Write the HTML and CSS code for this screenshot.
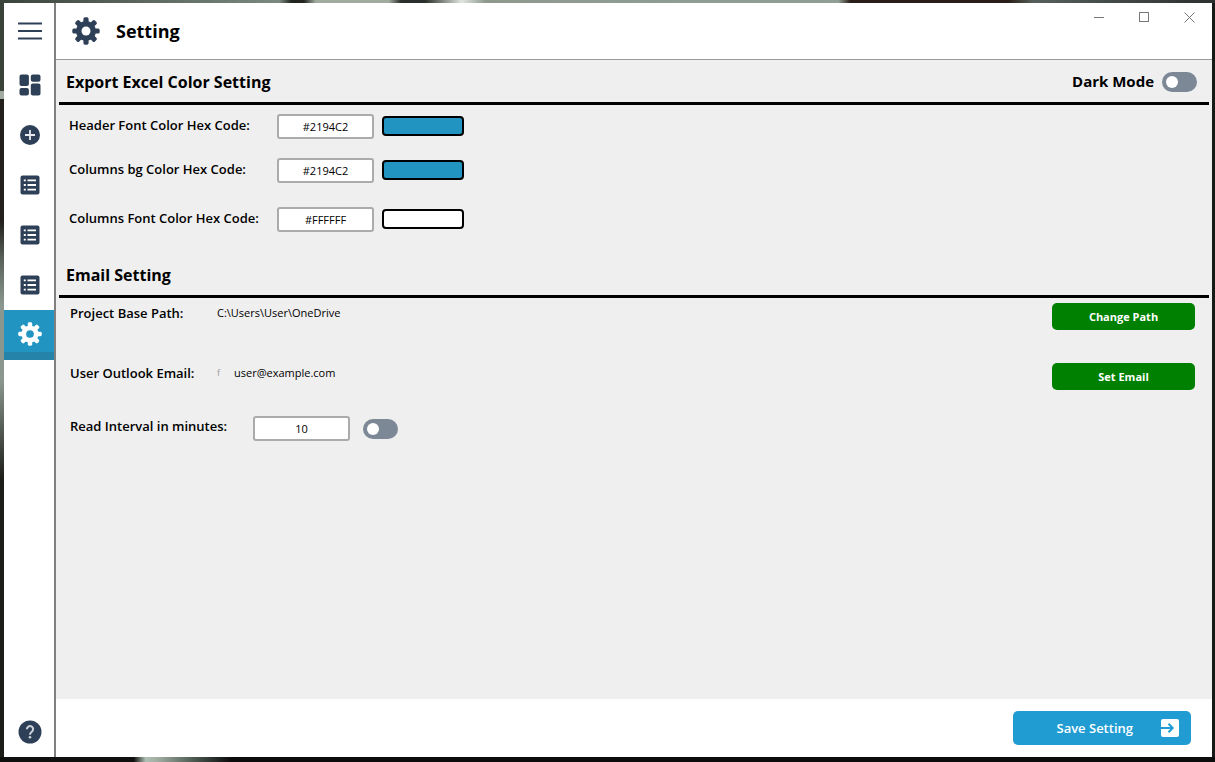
FILE: index.html
```html
<!DOCTYPE html>
<html lang="en">

<head>
    <meta charset="UTF-8">
    <meta name="viewport" content="width=device-width, initial-scale=1.0">
    <title>Setting</title>
    <link rel="stylesheet" href="styles.css">
</head>

<body>
    <!-- shapes used more than once -->
    <svg class="defs" aria-hidden="true">
        <symbol id="gear" viewBox="0 0 28 28">
            <g fill="currentColor">
                <rect x="11.4" y="0.3" width="5.2" height="27.4" rx="1.6" />
                <rect x="11.4" y="0.3" width="5.2" height="27.4" rx="1.6" transform="rotate(45 14 14)" />
                <rect x="11.4" y="0.3" width="5.2" height="27.4" rx="1.6" transform="rotate(90 14 14)" />
                <rect x="11.4" y="0.3" width="5.2" height="27.4" rx="1.6" transform="rotate(135 14 14)" />
                <circle cx="14" cy="14" r="10" />
            </g>
            <circle class="gear-hole" cx="14" cy="14" r="4.5" />
        </symbol>
        <symbol id="list" viewBox="0 0 20 20">
            <rect x="0.5" y="0.5" width="19" height="19" rx="2" fill="currentColor" />
            <path d="M7.5 5.3h8.5M7.5 10h8.5M7.5 14.7h8.5M3.8 5.3h2M3.8 10h2M3.8 14.7h2" stroke="#fff" stroke-width="1.8" />
        </symbol>
    </svg>

    <div class="window">
        <nav class="sidebar">
            <button class="menu" aria-label="Menu">
                <svg width="24" height="18" viewBox="0 0 24 18"><path d="M0 1.5h24M0 9h24M0 16.5h24" stroke="currentColor" stroke-width="2" /></svg>
            </button>
            <a class="item" href="#dashboard" aria-label="Dashboard">
                <svg width="22" height="22" viewBox="0 0 22 22" fill="currentColor">
                    <rect x="0.5" y="0.5" width="9.4" height="11.6" rx="2" />
                    <rect x="11.8" y="0.5" width="9.7" height="7.2" rx="2" />
                    <rect x="0.5" y="14" width="9.4" height="7.5" rx="2" />
                    <rect x="11.8" y="9.6" width="9.7" height="11.9" rx="2" />
                </svg>
            </a>
            <a class="item" href="#add" aria-label="Add">
                <svg width="22" height="22" viewBox="0 0 22 22">
                    <circle cx="11" cy="11" r="10" fill="currentColor" />
                    <path d="M11 6v10M6 11h10" stroke="#e8ecf0" stroke-width="1.8" />
                </svg>
            </a>
            <a class="item" href="#list1" aria-label="List 1"><svg width="20" height="20"><use href="#list" /></svg></a>
            <a class="item" href="#list2" aria-label="List 2"><svg width="20" height="20"><use href="#list" /></svg></a>
            <a class="item" href="#list3" aria-label="List 3"><svg width="20" height="20"><use href="#list" /></svg></a>
            <a class="item active" href="#setting" aria-label="Setting"><svg width="24" height="24"><use href="#gear" /></svg></a>
            <a class="item help" href="#help" aria-label="Help">
                <svg width="24" height="24" viewBox="0 0 24 24">
                    <circle cx="12" cy="12" r="11.5" fill="currentColor" />
                    <path d="M8.9 9.2a3.1 3.1 0 1 1 4.9 2.5c-1.2.9-1.8 1.4-1.8 3" fill="none" stroke="#ccd3da" stroke-width="2" />
                    <circle cx="12" cy="17.3" r="1.3" fill="#ccd3da" />
                </svg>
            </a>
        </nav>

        <div class="main">
            <header class="header">
                <svg width="28" height="28"><use href="#gear" /></svg>
                <h1>Setting</h1>
                <div class="controls">
                    <button aria-label="Minimize"><svg width="11" height="11"><path d="M0 5.5h10" stroke="#777" /></svg></button>
                    <button aria-label="Maximize"><svg width="11" height="11"><rect x="0.5" y="0.5" width="9" height="9" fill="none" stroke="#777" /></svg></button>
                    <button aria-label="Close"><svg width="11" height="11"><path d="M0.5 0.5l10 10M10.5 0.5l-10 10" stroke="#777" /></svg></button>
                </div>
            </header>

            <main class="content">
                <div class="title">
                    <h2>Export Excel Color Setting</h2>
                    <label class="dark" for="dark">Dark Mode</label>
                    <input class="switch" type="checkbox" id="dark">
                </div>
                <div class="colors">
                    <label for="headerFont">Header Font Color Hex Code:</label>
                    <input class="field" type="text" id="headerFont" value="#2194C2">
                    <button class="swatch blue" aria-label="Pick header font color"></button>
                    <label for="columnsBg">Columns bg Color Hex Code:</label>
                    <input class="field" type="text" id="columnsBg" value="#2194C2">
                    <button class="swatch blue" aria-label="Pick columns bg color"></button>
                    <label for="columnsFont">Columns Font Color Hex Code:</label>
                    <input class="field" type="text" id="columnsFont" value="#FFFFFF">
                    <button class="swatch" aria-label="Pick columns font color"></button>
                </div>

                <div class="title">
                    <h2>Email Setting</h2>
                </div>
                <div class="email">
                    <div class="row">
                        <span class="name">Project Base Path:</span>
                        <span class="path">C:\Users\User\OneDrive</span>
                        <button class="green">Change Path</button>
                    </div>
                    <div class="row">
                        <span class="name">User Outlook Email:</span>
                        <span class="mark">f</span>
                        <span class="address">user@example.com</span>
                        <button class="green">Set Email</button>
                    </div>
                    <div class="row interval">
                        <label for="interval">Read Interval in minutes:</label>
                        <div class="group">
                            <input class="field" type="text" id="interval" value="10">
                            <input class="switch" type="checkbox" aria-label="Read at interval">
                        </div>
                    </div>
                </div>
            </main>

            <footer class="footer">
                <button class="save">
                    <span>Save Setting</span>
                    <svg width="18" height="18" viewBox="0 0 18 18">
                        <rect width="18" height="18" rx="2" fill="#fff" />
                        <path d="M0 9h11M7.5 4.8L11.7 9l-4.2 4.2" fill="none" stroke="#209cd2" stroke-width="2" />
                    </svg>
                </button>
            </footer>
        </div>
    </div>
</body>

</html>
```
FILE: styles.css
```css
* {
    box-sizing: border-box;
}

/* the desktop shows as a thin edge around the window */
body {
    margin: 0;
    height: 100vh;
    padding: 3px 3px 5px 4px;
    background:
        linear-gradient(90deg, #3a443b, #7b897f 23%, #22251f 24%, #22251f 25%, #a0aca0 26%, #a0aca0 32%, #2c302c 33%, #2c302c 35%, #e0e6e0 38%, #8e998e 40%, #8f9f94 69%, #2a1f18 70%, #2a1f18 83%, #56605a 85%, #2c302e) top / 100% 3px no-repeat,
        linear-gradient(90deg, #0f100e 11%, #b0c0b4 12%, #a0aca0 13%, #4a5850 16%, #0c0c0c 19%) bottom / 100% 5px no-repeat,
        linear-gradient(#3a4239 12%, #a0aca0 12%, #a0aca0 13%, #221f1c 13%, #221f1c 29%, #59625a 34%, #8a978e 40%, #8a978e 50%, #1c1c18 63%) left / 4px 100% no-repeat,
        #181a18;
    font-family: "Open Sans", "Noto Sans", sans-serif;
    font-size: 11px;
    color: #000;
}

button,
input {
    margin: 0;
    padding: 0;
    border: 0;
    font: inherit;
}

button {
    background: none;
    cursor: pointer;
}

svg {
    display: block;
}

.defs {
    position: absolute;
    width: 0;
    height: 0;
}

.gear-hole {
    fill: var(--hole, #fff);
}

.window {
    display: flex;
    height: 100%;
    background: #fff;
}

/* sidebar */
.sidebar {
    display: flex;
    flex-direction: column;
    width: 52px;
    border-right: 2px solid #808080;
    color: #2e4057;
}

.menu,
.item {
    display: flex;
    align-items: center;
    justify-content: center;
    height: 50px;
    padding: 0 0 1px 2px;
    color: inherit;
}

.menu {
    height: 57px;
}

.active {
    --hole: #2194c2;
    background: #2194c2;
    border-bottom: 8px solid #2583aa;
    padding: 6px 0 0 2px;
    color: #fff;
}

.help {
    margin-top: auto;
}

/* header */
.main {
    display: flex;
    flex-direction: column;
    flex: 1;
}

.header {
    display: flex;
    align-items: center;
    gap: 16px;
    height: 57px;
    padding-left: 16px;
    border-bottom: 1px solid #999;
    color: #2e4057;
}

h1 {
    margin: 0;
    font-size: 18px;
    font-weight: 700;
    color: #000;
}

.controls {
    display: flex;
    align-self: flex-start;
    margin-left: auto;
}

.controls button {
    display: flex;
    align-items: center;
    justify-content: center;
    width: 45px;
    height: 29px;
}

/* content */
.content {
    flex: 1;
    padding: 0 3px;
    background: #efefef;
}

.title {
    display: flex;
    align-items: center;
    height: 45px;
    padding: 2px 12px 0 7px;
    border-bottom: 3px solid #000;
}

h2 {
    margin: 0;
    font-size: 16px;
    font-weight: 700;
}

.title .dark {
    margin-left: auto;
    margin-right: 8px;
    font-size: 15px;
    font-weight: 700;
}

.switch {
    appearance: none;
    display: flex;
    align-items: center;
    width: 35px;
    height: 20px;
    padding-left: 4px;
    border-radius: 10px;
    background: #7c8896;
}

.switch::before {
    content: "";
    width: 12px;
    height: 12px;
    border-radius: 50%;
    background: #fff;
}

.switch:checked {
    justify-content: flex-end;
    padding: 0 4px 0 0;
    background: #2194c2;
}

label,
.name {
    padding-bottom: 2px;
    font-size: 13px;
    font-weight: 600;
}

.colors {
    display: grid;
    grid-template-columns: 200px 97px 82px;
    grid-template-rows: 42px 46px 52px;
    column-gap: 8px;
    align-items: center;
    height: 148px;
    padding-left: 10px;
}

.field {
    width: 97px;
    height: 25px;
    border: 2px solid #ababab;
    border-radius: 3px;
    background: #fff;
    text-align: center;
}

.swatch {
    height: 20px;
    border: 2px solid #000;
    border-radius: 4px;
    background: #fff;
}

.blue {
    background: #2194c2;
}

.email {
    padding: 0 14px 0 11px;
}

.row {
    display: flex;
    align-items: flex-start;
    height: 60px;
    padding-top: 5px;
    line-height: 20px;
}

.name {
    width: 147px;
}

.mark {
    width: 17px;
    font-size: 9px;
    color: #999;
}

.green {
    width: 143px;
    height: 27px;
    margin-left: auto;
    border-radius: 5px;
    background: #008000;
    font-weight: 700;
    color: #fff;
}

.interval {
    height: 50px;
    margin-top: -2px;
    padding-top: 0;
}

.interval label {
    width: 183px;
}

.group {
    display: flex;
    align-items: center;
    gap: 13px;
}

/* footer */
.footer {
    display: flex;
    align-items: center;
    justify-content: flex-end;
    height: 58px;
    padding-right: 21px;
}

.save {
    display: flex;
    align-items: center;
    gap: 28px;
    height: 34px;
    padding: 0 12px 0 43px;
    border-radius: 5px;
    background: #209cd2;
    font-size: 13px;
    font-weight: 600;
    color: #fff;
}
```
